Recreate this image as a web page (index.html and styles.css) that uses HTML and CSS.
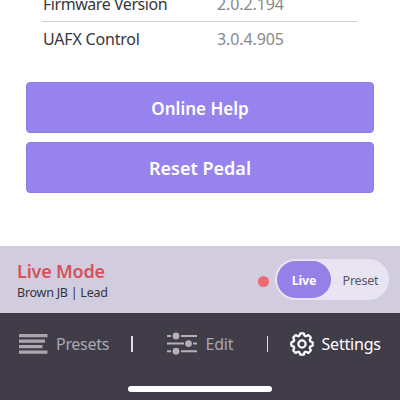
FILE: index.html
```
<!DOCTYPE html>
<html lang="en">
<head>
<meta charset="utf-8">
<title>Settings</title>
<link rel="stylesheet" href="styles.css">
</head>
<body>
<main class="screen">
  <section class="details">
    <div class="row"><span class="label firmware">Firmware Version</span><span class="value">2.0.2.194</span></div>
    <div class="row"><span class="label">UAFX Control</span><span class="value">3.0.4.905</span></div>
  </section>
  <section class="actions">
    <button class="action">Online Help</button>
    <button class="action reset">Reset Pedal</button>
  </section>
  <section class="mode">
    <div class="mode-info">
      <div class="mode-name">Live Mode</div>
      <div class="mode-preset">Brown JB | Lead</div>
    </div>
    <span class="dot"></span>
    <div class="switch">
      <span class="option selected">Live</span>
      <span class="option">Preset</span>
    </div>
  </section>
  <nav class="tabs">
    <a class="tab presets">
      <svg width="29" height="20" viewBox="0 0 29 20" fill="#a9a6b0"><path d="M0 0h28.500v3.300H0zM0 5.500h26v3.300H0zM0 11h23.500v3.300H0zM0 16.500h28.500v3.300H0z"/></svg>
      <span class="tab-label">Presets</span>
    </a>
    <span class="divider"></span>
    <a class="tab edit">
      <svg width="30" height="23" viewBox="0 0 30 23" fill="#b3b0ba"><path d="M0 3h4v2H0zM14 3h16v2H14zM0 10.600h17v2H0zM26 10.600h4v2h-4zM0 18.200h4v2H0zM14 18.200h16v2H14z"/><circle cx="9" cy="4" r="3.400"/><circle cx="21.500" cy="11.600" r="3.400"/><circle cx="9" cy="19.200" r="3.400"/></svg>
      <span class="tab-label">Edit</span>
    </a>
    <span class="divider"></span>
    <a class="tab settings">
      <svg width="24" height="24" viewBox="0 0 24 24" fill="none" stroke="#fff" stroke-width="2.200" stroke-linejoin="round"><path d="M10.600 1.300h2.800q.5 0 .6.500l.3 1.400q.2.700.9.900.7.300 1.300 0l1.300-.8q.5-.3.900.1l1.900 1.900q.4.400.1.900l-.8 1.300q-.3.600 0 1.300.2.700.9.900l1.400.3q.5.100.5.600v2.800q0 .5-.5.600l-1.400.3q-.7.200-.9.900-.3.700 0 1.300l.8 1.300q.3.500-.1.900l-1.900 1.900q-.4.400-.9.100l-1.300-.8q-.6-.3-1.300 0-.7.200-.9.900l-.3 1.400q-.1.500-.6.500h-2.800q-.5 0-.6-.5l-.3-1.400q-.2-.7-.9-.9-.7-.3-1.300 0l-1.300.8q-.5.300-.9-.1l-1.900-1.900q-.4-.4-.1-.9l.8-1.300q.3-.6 0-1.300-.2-.7-.9-.9l-1.400-.3q-.5-.1-.5-.6v-2.800q0-.5.500-.6l1.400-.3q.7-.2.900-.9.300-.7 0-1.300l-.8-1.300q-.3-.5.100-.9l1.900-1.900q.4-.4.900-.1l1.300.8q.6.300 1.300 0 .7-.2.900-.9l.3-1.400q.1-.5.600-.5z"/><circle cx="12" cy="12" r="3.600"/></svg>
      <span class="tab-label">Settings</span>
    </a>
    <span class="home-bar"></span>
  </nav>
</main>
</body>
</html>
```
FILE: styles.css
```
* { box-sizing: border-box; }
body { margin: 0; font-family: "Noto Sans", "Open Sans", sans-serif; background: #fff; }
.screen { width: 400px; height: 400px; overflow: hidden; display: flex; flex-direction: column; }
.details { height: 82px; padding: 0 43px 24px 42px; display: flex; flex-direction: column; justify-content: flex-end; }
.row { height: 36px; flex: none; display: flex; align-items: center; font-size: 16px; line-height: 22px; color: #37373a; white-space: nowrap; }
.row:first-child { border-bottom: 1px solid #cfcfcf; }
.row:last-child { padding-bottom: 2px; }
.label { width: 175px; padding-left: 1px; letter-spacing: -0.2px; }
.firmware { letter-spacing: -0.450px; }
.value { color: #88888b; letter-spacing: -0.1px; }
.actions { height: 164px; padding: 0 26px; display: flex; flex-direction: column; gap: 9px; }
.action { height: 51px; flex: none; margin: 0; padding: 2px 0 0; border: 1px solid #8f7be0; border-radius: 4px; background: #9783ee; color: #fff; font: 600 17px/24px "Noto Sans", sans-serif; }
.reset { padding-top: 0; font-size: 18px; }
.mode { height: 67px; padding: 0 11px 0 17px; display: flex; align-items: center; background: #d1cddf; }
.mode-info { flex: 1; padding-top: 4px; white-space: nowrap; }
.mode-name { font-size: 18px; line-height: 22px; font-weight: 600; letter-spacing: -0.200px; color: #d4525c; }
.mode-preset { font-size: 12.5px; line-height: 21px; letter-spacing: -0.25px; color: #35333e; }
.dot { width: 11px; height: 11px; border-radius: 50%; background: #ee6a70; margin: 3px 6px 0 0; }
.switch { width: 114px; height: 41px; padding: 2px; display: flex; border-radius: 21px; background: #e8e4f2; }
.option { flex: 1; display: flex; align-items: center; justify-content: center; padding: 1px 0 0 3px; font-size: 12.5px; letter-spacing: -0.200px; color: #59565f; border-radius: 19px; }
.selected { flex: none; width: 54px; padding: 1px 0 0; background: #9480e6; color: #fff; font-weight: 700; }
.tabs { height: 87px; position: relative; padding: 18px 19px 0; display: flex; align-items: flex-start; background: #403d49; }
.tab { height: 25px; display: flex; align-items: center; color: #aaa7b2; font-size: 16px; line-height: 24px; white-space: nowrap; }
.tab svg { flex: none; }
.presets { width: 112px; gap: 8px; letter-spacing: -0.300px; }
.edit { width: 134px; padding-left: 34px; gap: 9px; letter-spacing: -0.200px; }
.settings { padding-left: 21.5px; gap: 8px; letter-spacing: -0.200px; color: #fff; }
.divider { width: 1.500px; height: 16px; margin-top: 5px; background: #ddd9e6; }
.home-bar { position: absolute; left: 128px; bottom: 8px; width: 144px; height: 6px; border-radius: 3px; background: #fff; }
```
